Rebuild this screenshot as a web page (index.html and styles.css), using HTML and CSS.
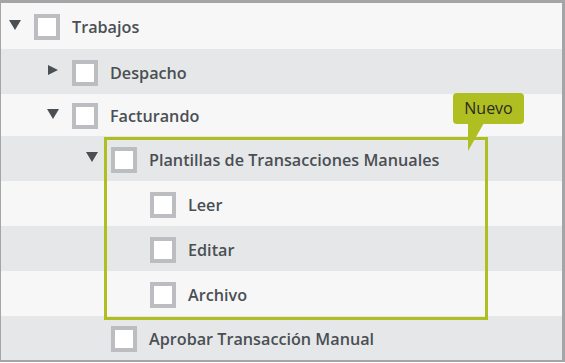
FILE: index.html
```html
<!DOCTYPE html>
<html lang="es">
<head>
    <meta charset="UTF-8">
    <meta name="viewport" content="width=device-width, initial-scale=1.0">
    <title>Permisos</title>
    <link rel="stylesheet" href="styles.css">
</head>
<body>
    <div class="tree">
        <div class="row light lvl-0 h46">
            <span class="toggle"><span class="tri-down"></span></span>
            <span class="check"></span>
            <span class="label">Trabajos</span>
        </div>
        <div class="row grey lvl-1">
            <span class="toggle"><span class="tri-right"></span></span>
            <span class="check"></span>
            <span class="label">Despacho</span>
        </div>
        <div class="row light lvl-1 h42">
            <span class="toggle"><span class="tri-down"></span></span>
            <span class="check"></span>
            <span class="label">Facturando</span>
        </div>
        <div class="row grey lvl-2">
            <span class="toggle"><span class="tri-down"></span></span>
            <span class="check"></span>
            <span class="label">Plantillas de Transacciones Manuales</span>
        </div>
        <div class="row light lvl-3">
            <span class="toggle"></span>
            <span class="check"></span>
            <span class="label">Leer</span>
        </div>
        <div class="row grey lvl-3">
            <span class="toggle"></span>
            <span class="check"></span>
            <span class="label">Editar</span>
        </div>
        <div class="row light lvl-3">
            <span class="toggle"></span>
            <span class="check"></span>
            <span class="label">Archivo</span>
        </div>
        <div class="row grey lvl-2 h44">
            <span class="toggle"></span>
            <span class="check"></span>
            <span class="label">Aprobar Transacción Manual</span>
        </div>

        <!-- resaltado del grupo nuevo -->
        <div class="highlight"></div>
        <div class="badge">
            Nuevo
            <span class="badge-tail"></span>
        </div>
    </div>
</body>
</html>
```

FILE: styles.css
```css
:root {
    --frame: #a4a5a6;
    --row-light: #f7f7f7;
    --row-grey: #e6e7e8;
    --text: #4a4f54;
    --box: #bcbdc0;
    --accent: #afbe21;
}

body {
    margin: 0;
    padding: 0;
    background: #ffffff;
    font-family: "Open Sans", "Liberation Sans", sans-serif;
}

.tree {
    position: relative;
    width: 565px;
    box-sizing: border-box;
    border-top: 3px solid var(--frame);
    border-left: 1px solid var(--frame);
    border-right: 3px solid var(--frame);
    border-bottom: 2px solid var(--frame);
    display: flex;
    flex-direction: column;
}

.row {
    display: flex;
    align-items: center;
    height: 45px;
    color: var(--text);
    font-size: 16.2px;
    font-weight: 600;
}

.row.h46 { height: 46px; }
.row.h42 { height: 42px; }
.row.h44 { height: 44px; }

.row.light { background: var(--row-light); }
.row.grey { background: var(--row-grey); }

.lvl-0 { padding-left: 8px; }
.lvl-1 { padding-left: 46px; }
.lvl-2 { padding-left: 85px; }
.lvl-3 { padding-left: 124px; }

.toggle {
    width: 25px;
    display: flex;
    align-items: center;
    margin-top: -3px;
}

.tri-down {
    width: 0;
    height: 0;
    border-left: 6px solid transparent;
    border-right: 6px solid transparent;
    border-top: 10px solid var(--text);
}

.tri-right {
    width: 0;
    height: 0;
    margin-left: 1px;
    border-top: 5.5px solid transparent;
    border-bottom: 5.5px solid transparent;
    border-left: 10px solid var(--text);
}

.check {
    width: 26px;
    height: 26px;
    box-sizing: border-box;
    border: 4px solid var(--box);
    background: #ffffff;
    margin-top: 2px;
}

.label {
    margin-left: 12px;
    margin-top: 2px;
}

.highlight {
    position: absolute;
    left: 103px;
    top: 134px;
    width: 384px;
    height: 183px;
    box-sizing: border-box;
    border: 3px solid var(--accent);
}

.badge {
    position: absolute;
    left: 452px;
    top: 90px;
    width: 71px;
    height: 31px;
    box-sizing: border-box;
    background: var(--accent);
    border-radius: 4px;
    color: #2b2b22;
    font-size: 16px;
    font-weight: 400;
    line-height: 31px;
    text-align: center;
}

.badge-tail {
    position: absolute;
    left: 15px;
    top: 30px;
    width: 0;
    height: 0;
    border-left: 0 solid transparent;
    border-right: 16px solid transparent;
    border-top: 28px solid var(--accent);
}
```
